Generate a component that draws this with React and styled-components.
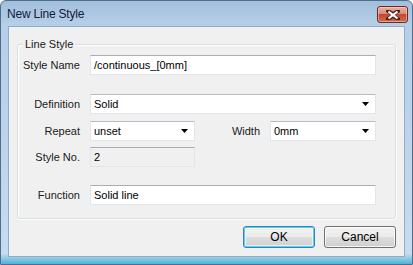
import React from "react";
import styled, { createGlobalStyle } from "styled-components";

const GlobalStyle = createGlobalStyle`
  html, body {
    margin: 0;
    padding: 0;
    background: #ffffff;
  }
  body {
    font-family: "Liberation Sans", Arial, sans-serif;
    font-size: 11px;
    color: #000;
  }
`;

const ArrowDown = () => (
  <svg width="7" height="4" viewBox="0 0 7 4">
    <path d="M0 0h7L3.5 4z" fill="#000" />
  </svg>
);

const CloseGlyph = () => (
  <svg width="14" height="10" viewBox="0 0 14 10">
    <path
      d="M2 1l5 3.2L12 1M2 9l5-3.2L12 9"
      stroke="#4a1f16"
      strokeWidth="4"
      fill="none"
      strokeLinecap="square"
    />
    <path
      d="M2.5 1.5L7 5l4.5-3.5M2.5 8.5L7 5l4.5 3.5"
      stroke="#fff"
      strokeWidth="2.2"
      fill="none"
    />
  </svg>
);

const App = () => {
  return (
    <>
      <GlobalStyle />
      <Window>
        <TitleBar>
          <Title>New Line Style</Title>
          <CloseButton>
            <CloseGlyph />
          </CloseButton>
        </TitleBar>
        <Client>
          <GroupBox>
            <Legend>Line Style</Legend>
            <Row $top={1}>
              <Label $align="left">Style Name</Label>
              <TextBox>/continuous_[0mm]</TextBox>
            </Row>
            <Row $top={19}>
              <Label>Definition</Label>
              <Select>
                <span>Solid</span>
                <ArrowDown />
              </Select>
            </Row>
            <SplitRow $top={7}>
              <Label>Repeat</Label>
              <Select>
                <span>unset</span>
                <ArrowDown />
              </Select>
              <Label>Width</Label>
              <Select>
                <span>0mm</span>
                <ArrowDown />
              </Select>
            </SplitRow>
            <SplitRow $top={6}>
              <Label>Style No.</Label>
              <TextBox $disabled>2</TextBox>
            </SplitRow>
            <Row $top={18}>
              <Label>Function</Label>
              <TextBox>Solid line</TextBox>
            </Row>
          </GroupBox>
          <ButtonRow>
            <Button $default>OK</Button>
            <Button>Cancel</Button>
          </ButtonRow>
        </Client>
      </Window>
    </>
  );
};

const Window = styled.div`
  width: 413px;
  height: 265px;
  box-sizing: border-box;
  border: 1px solid #4f6d8e;
  border-radius: 6px 6px 0 0;
  background: linear-gradient(
    to bottom,
    #a2bedb 0px,
    #b6cfe8 24px,
    #bed5ec 60%,
    #c6dcf0 96%,
    #4cb4d8 100%
  );
  display: flex;
  flex-direction: column;
  overflow: hidden;
`;

const TitleBar = styled.div`
  height: 24px;
  display: flex;
  align-items: center;
  justify-content: space-between;
  padding: 0 4px 0 6px;
`;

const Title = styled.div`
  font-family: "Liberation Sans", Arial, sans-serif;
  font-size: 12px;
  letter-spacing: -0.2px;
  color: #10203a;
  margin-top: 2px;
`;

const CloseButton = styled.div`
  width: 31px;
  height: 17px;
  box-sizing: border-box;
  margin-top: 3px;
  border: 1px solid #6a2c22;
  border-radius: 3px;
  background: linear-gradient(
    to bottom,
    #e8b0a2 0%,
    #d98a78 45%,
    #c4482f 50%,
    #cf6a4f 100%
  );
  box-shadow: inset 0 0 0 1px rgba(255, 220, 210, 0.5);
  display: flex;
  align-items: center;
  justify-content: center;
`;

const Client = styled.div`
  flex: 1;
  margin: 1px 7px 7px 7px;
  background: #f0f0f0;
  border: 1px solid #93acc7;
  display: flex;
  flex-direction: column;
  padding: 0 8px 0 8px;
`;

const GroupBox = styled.div`
  position: relative;
  margin-top: 17px;
  height: 175px;
  box-sizing: border-box;
  border: 1px solid #d5dfe5;
  border-radius: 3px;
  box-shadow: inset 1px 1px 0 #fff, 1px 1px 0 #fff;
  padding: 9px 19px 0 5px;
`;

const Legend = styled.span`
  position: absolute;
  top: -7px;
  left: 5px;
  padding: 0 2px;
  background: #f0f0f0;
  color: #1a1a1a;
`;

const Row = styled.div`
  display: grid;
  grid-template-columns: 58px 1fr;
  column-gap: 9px;
  align-items: center;
  margin-top: ${({ $top }) => $top || 0}px;
`;

const SplitRow = styled.div`
  display: grid;
  grid-template-columns: 58px 105px 1fr 106px;
  column-gap: 9px;
  align-items: center;
  margin-top: ${({ $top }) => ($top === undefined ? 8 : $top)}px;
`;

const Label = styled.div`
  text-align: ${({ $align }) => $align || "right"};
  white-space: nowrap;
  color: #1a1a1a;
  padding-right: 1px;
`;

const TextBox = styled.div`
  height: 20px;
  box-sizing: border-box;
  border: 1px solid #dfe6ec;
  border-top-color: #abadb3;
  background: ${({ $disabled }) => ($disabled ? "#f0f0f0" : "#ffffff")};
  padding: 0 3px;
  display: flex;
  align-items: center;
  color: #000;
`;

const Select = styled.div`
  height: 20px;
  box-sizing: border-box;
  border: 1px solid #dfe6ec;
  border-top-color: #b8bcc2;
  background: #ffffff;
  padding: 0 6px 0 3px;
  display: flex;
  align-items: center;
  justify-content: space-between;
  color: #000;
`;

const ButtonRow = styled.div`
  display: flex;
  justify-content: flex-end;
  gap: 9px;
  margin-top: 7px;
`;

const Button = styled.div`
  width: 72px;
  height: 22px;
  box-sizing: border-box;
  border: 1px solid ${({ $default }) => ($default ? "#3c7fb1" : "#707070")};
  border-radius: 3px;
  background: linear-gradient(
    to bottom,
    #f2f2f2 0%,
    #ebebeb 50%,
    #dddddd 51%,
    #cfcfcf 100%
  );
  box-shadow: ${({ $default }) =>
    $default
      ? "inset 0 0 0 1px #48d8fb, inset 0 0 0 2px rgba(255,255,255,0.6)"
      : "inset 0 0 0 1px rgba(255,255,255,0.8)"};
  display: flex;
  align-items: center;
  justify-content: center;
  font-size: 12px;
  color: #000;
`;

export default App;
